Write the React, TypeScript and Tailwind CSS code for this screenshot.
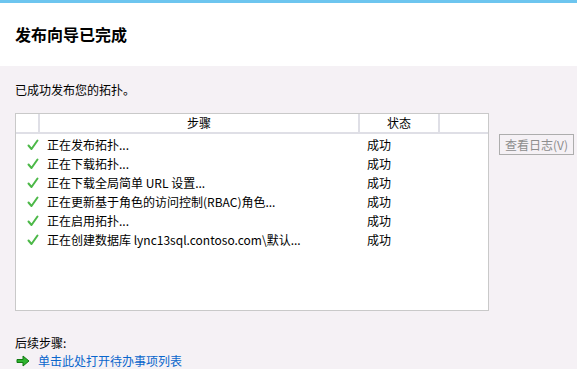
const rows = [
  "正在发布拓扑...",
  "正在下载拓扑...",
  "正在下载全局简单 URL 设置...",
  "正在更新基于角色的访问控制(RBAC)角色...",
  "正在启用拓扑...",
  "正在创建数据库 lync13sql.contoso.com\\默认...",
];

const Check = () => (
  <svg width="12" height="12" viewBox="0 0 12 12">
    <path d="M1.5 6.5 L4.5 10 L10.5 1.5" fill="none" stroke="#4cb848" strokeWidth="2" strokeLinecap="round" strokeLinejoin="round" />
  </svg>
);

const Arrow = () => (
  <svg width="14" height="12" viewBox="0 0 14 12">
    <path d="M1 4.5 H7 V1 L13 6 L7 11 V7.5 H1 Z" fill="#2fb32f" stroke="#137a13" strokeWidth="1" strokeLinejoin="round" />
  </svg>
);

export default function App() {
  return (
    <div
      className="w-[577px] h-[369px] overflow-hidden bg-[#f5f1f5] text-[12px] text-black flex flex-col"
      style={{ fontFamily: '"Noto Sans CJK SC", "Noto Sans", sans-serif' }}
    >
      <div className="h-[3px] bg-[#6dc5ef]" />
      <div className="h-[63px] bg-white flex items-center pl-[15px] pb-[2px]">
        <h1 className="text-[16px] font-bold leading-none">发布向导已完成</h1>
      </div>

      <div className="pl-[15px] pt-[16px] leading-[16px]">已成功发布您的拓扑。</div>

      <div className="flex pl-[15px] pt-[15px]">
        <div className="w-[474px] h-[198px] bg-white border border-[#c9c9c9] flex flex-col">
          <div className="flex h-[20px] border-b-2 border-[#dfdfe6] leading-[18px]">
            <div className="w-[24px] border-r-2 border-[#dfdfe6]" />
            <div className="w-[320px] border-r-2 border-[#dfdfe6] text-center">步骤</div>
            <div className="w-[80px] border-r-2 border-[#dfdfe6] text-center">状态</div>
            <div className="flex-1" />
          </div>
          <div className="flex flex-col pt-[1px]">
            {rows.map((r) => (
              <div key={r} className="flex h-[19px] items-center">
                <div className="w-[31px] flex justify-center pl-[2px]">
                  <Check />
                </div>
                <div className="w-[320px] whitespace-nowrap">{r}</div>
                <div className="pl-[0px]">成功</div>
              </div>
            ))}
          </div>
        </div>
        <div className="pl-[10px] pt-[21px]">
          <div className="w-[75px] h-[21px] border border-[#adadad] bg-[#f5f1f5] text-[#8d8d8d] flex items-center justify-center whitespace-nowrap">
            查看日志(V)
          </div>
        </div>
      </div>

      <div className="pl-[15px] pt-[24px] leading-[16px]">后续步骤:</div>
      <div className="pl-[16px] pt-[2px] flex items-center gap-[8px] leading-[16px]">
        <Arrow />
        <span className="text-[#0a66cc]">单击此处打开待办事项列表</span>
      </div>
    </div>
  );
}
